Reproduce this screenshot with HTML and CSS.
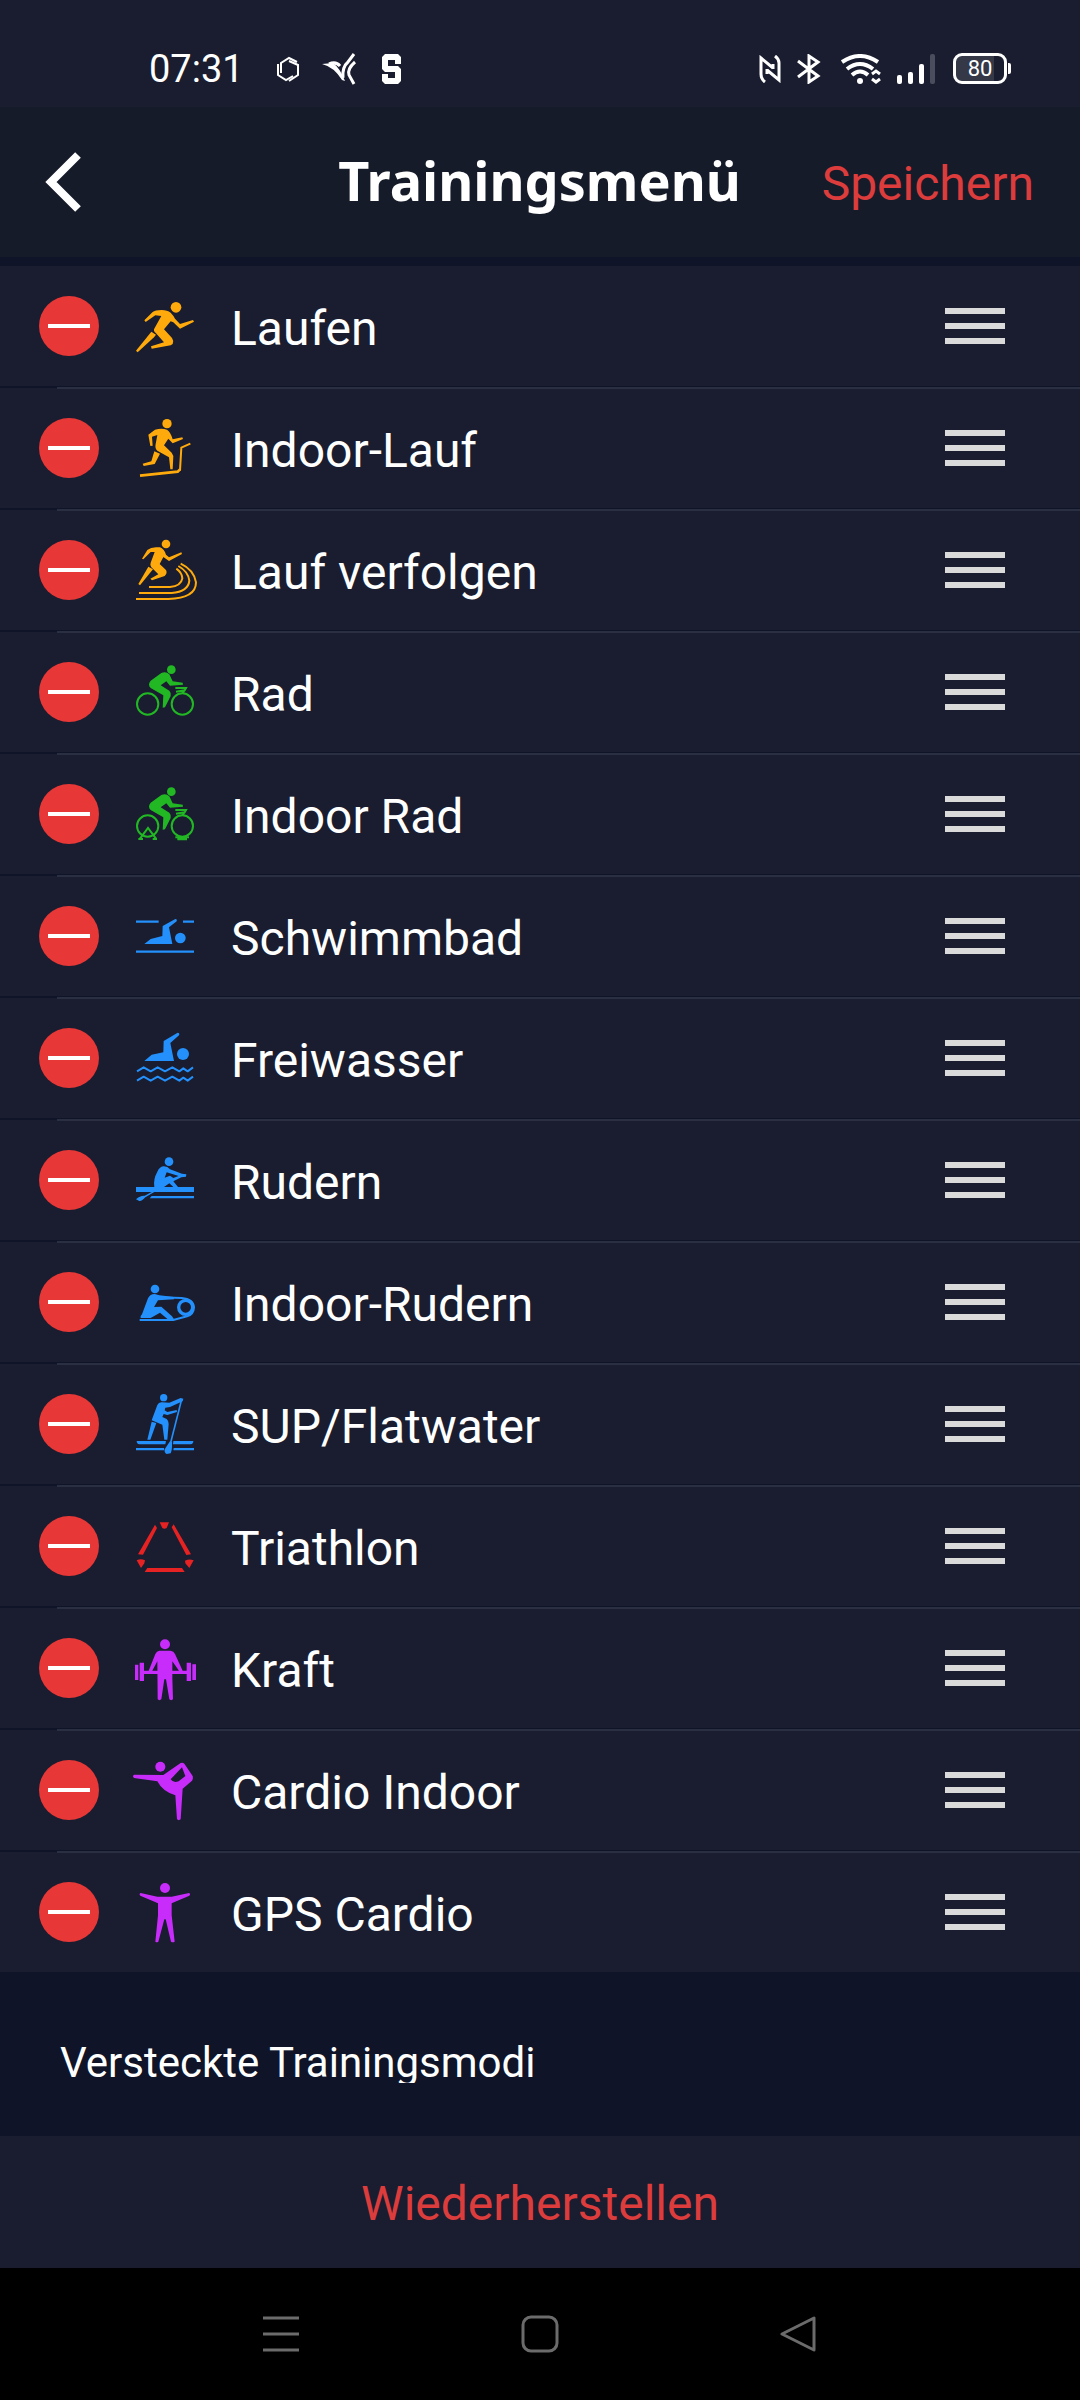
FILE: index.html
```html
<!DOCTYPE html>
<html lang="de">
<head>
<meta charset="utf-8">
<meta name="viewport" content="width=device-width, initial-scale=1">
<title>Trainingsmenü</title>
<link rel="stylesheet" href="styles.css">
</head>
<body>
<div class="status">
  <div class="status-left">
    <span class="clock">07:31</span>
    <svg class="s-hex" width="24" height="28" viewBox="0 0 24 28" fill="none" stroke="#fff" stroke-width="2"><path d="M5 18V8L13 3L21 7M2 9V20L10 25L17 21M13 6L22 10V20L13 26"/></svg>
    <svg class="s-bird" width="34" height="32" viewBox="0 0 34 32" fill="none" stroke="#fff" stroke-width="3"><path d="M7 11Q14 8 18 13M21 25Q20 14 26 9L32 1M33 9Q25 16 27 22L32 31"/><path d="M0 11L11 10Q18 15 23 28L20 27Q12 14 0 11Z" fill="#fff" stroke="none"/></svg>
    <svg class="s-s" width="19" height="30" viewBox="0 0 19 30"><path fill="#fff" d="M3 0H16L19 3V10H13V6H6V12H16L19 15V27L16 30H3L0 27V20H6V24H13V18H3L0 15V3Z"/></svg>
  </div>
  <div class="status-right">
    <svg width="22" height="28" viewBox="0 0 22 28" fill="none" stroke="#fff" stroke-width="3"><path d="M6 27Q2 24 2 19V3L14 13M16 1Q20 4 20 8V25L8 15M8 14V19M14 9V14"/></svg>
    <svg class="s-bt" width="24" height="30" viewBox="0 0 24 30" fill="none" stroke="#fff" stroke-width="3"><path d="M1 7L21 22L12 28V2L21 8L1 23"/></svg>
    <svg class="s-wifi" width="40" height="30" viewBox="0 0 40 30" fill="none" stroke="#fff" stroke-width="4"><path d="M1 8Q19-4 37 8M6 15Q19 5 32 15M11 21Q19 14 27 21"/><circle cx="19" cy="27" r="3" fill="#fff" stroke="none"/><path stroke-width="3" d="M31 20L35 17L39 20M31 25L35 28L39 25"/></svg>
    <svg class="s-signal" width="38" height="30" viewBox="0 0 38 30" fill="#fff"><rect y="21" width="5" height="9" rx="2"/><rect x="11" y="18" width="5" height="12" rx="2"/><rect x="22" y="10" width="5" height="20" rx="2"/><rect x="33" width="5" height="30" rx="2" fill="#4a4d5c"/></svg>
    <span class="battery">80</span>
  </div>
</div>

<header class="header">
  <button class="back" type="button" aria-label="Zurück"><svg width="38" height="60" viewBox="0 0 38 60" fill="none" stroke="#fff" stroke-width="8"><path d="M33 3L6 30L33 57"/></svg></button>
  <h1 class="title">Trainingsmenü</h1>
  <button class="save" type="button">Speichern</button>
</header>

<main>
  <ul class="list">
    <li class="row orange"><button class="remove" type="button" aria-label="Laufen entfernen"></button>
      <svg class="icon" viewBox="36 48 198 180"><circle cx="168" cy="82" r="16"/><path d="M73 121L98 96Q105 90 125 90Q142 90 152 98Q160 106 165 116L180 132L219 120L222 125L180 146L160 127L152 124L132 148L156 174Q162 182 158 192L152 196L95 206L93 199L132 187L108 160Q98 152 104 144L124 108L106 106L77 126Z"/><path d="M94 155L108 164L102 172L53 217L48 212Z"/></svg>
      <span class="label">Laufen</span><button class="handle" type="button" aria-label="Laufen verschieben"></button></li>
    <li class="row orange"><button class="remove" type="button" aria-label="Indoor-Lauf entfernen"></button>
      <svg class="icon" viewBox="36 414 198 180"><circle cx="141" cy="431" r="14"/><path d="M85 464L105 449Q125 444 141 449Q152 456 158 478L187 472L189 477L158 490L145 476L132 496L155 518L160 528L158 568H151L147 532L112 512Q104 506 107 492L112 465L96 470L98 497L91 498Z"/><path d="M103 514L120 521L104 552L71 558L68 551L94 544Z"/><path class="line" stroke-width="8" d="M60 587L173 575L180 568"/><path class="line" stroke-width="6" d="M180 572L184 503L211 491"/></svg>
      <span class="label">Indoor-Lauf</span><button class="handle" type="button" aria-label="Indoor-Lauf verschieben"></button></li>
    <li class="row orange"><button class="remove" type="button" aria-label="Lauf verfolgen entfernen"></button>
      <svg class="icon" viewBox="36 780 198 180"><circle cx="138" cy="792" r="13"/><path d="M66 836L82 810Q92 802 108 802L120 802Q132 806 138 824L147 832L184 817L186 822L147 843L130 831L119 852L138 870Q143 880 134 888L96 901L91 896L115 883L94 862Q89 856 92 848L104 816H92L70 838Z"/><path d="M85 860L99 868L60 916L55 912Z"/><path class="line" stroke-width="6" d="M87 921H150Q183 918 187 895Q186 878 169 866M57 939H155Q205 935 208 902Q205 875 175 858M48 957H145Q228 955 228 907Q222 870 182 851"/></svg>
      <span class="label">Lauf verfolgen</span><button class="handle" type="button" aria-label="Lauf verfolgen verschieben"></button></li>
    <li class="row green"><button class="remove" type="button" aria-label="Rad entfernen"></button>
      <svg class="icon" viewBox="36 66 198 180"><circle cx="154" cy="89" r="13"/><path d="M92 122L124 99Q138 93 148 103L158 124L188 128L189 134L150 137L139 124L122 136L148 152Q154 158 152 168L135 202L128 203L130 166L92 144Q82 134 92 122Z"/><circle class="line" stroke-width="6" cx="83" cy="192" r="32"/><circle class="line" stroke-width="6" cx="187" cy="192" r="32"/><path class="line" stroke-width="6" d="M166 144H198L194 151L168 155M194 151L187 160"/></svg>
      <span class="label">Rad</span><button class="handle" type="button" aria-label="Rad verschieben"></button></li>
    <li class="row green"><button class="remove" type="button" aria-label="Indoor Rad entfernen"></button>
      <svg class="icon" viewBox="36 66 198 180"><circle cx="154" cy="89" r="13"/><path d="M92 122L124 99Q138 93 148 103L158 124L188 128L189 134L150 137L139 124L122 136L148 152Q154 158 152 168L135 202L128 203L130 166L92 144Q82 134 92 122Z"/><circle class="line" stroke-width="6" cx="83" cy="192" r="32"/><circle class="line" stroke-width="6" cx="187" cy="192" r="32"/><path class="line" stroke-width="6" d="M166 144H198L194 151L168 155M194 151L187 160M60 230L84 198L108 230M55 231H69M98 231H111M166 226H207M172 232H201"/></svg>
      <span class="label">Indoor Rad</span><button class="handle" type="button" aria-label="Indoor Rad verschieben"></button></li>
    <li class="row blue"><button class="remove" type="button" aria-label="Schwimmbad entfernen"></button>
      <svg class="icon" viewBox="36 78 198 180"><path class="line" stroke-width="7" d="M48 125H116M189 125H222M48 215H222"/><circle cx="181" cy="174" r="16"/><path d="M73 192L92 177L127 168L128 138L166 117Q172 117 170 124L147 142L157 192Z"/></svg>
      <span class="label">Schwimmbad</span><button class="handle" type="button" aria-label="Schwimmbad verschieben"></button></li>
    <li class="row blue"><button class="remove" type="button" aria-label="Freiwasser entfernen"></button>
      <svg class="icon" viewBox="36 444 198 180"><circle cx="189" cy="522" r="18"/><path d="M73 543L95 524L130 517L131 483L173 458Q180 459 177 466L151 489L162 543Z"/><path class="line" stroke-width="6" stroke-linejoin="round" d="M51 574L71 562L92 574L113 562L135 574L157 562L178 574L190 565L203 574L219 562M51 602L71 590L92 602L113 590L135 602L157 590L178 602L190 593L203 602L219 590"/></svg>
      <span class="label">Freiwasser</span><button class="handle" type="button" aria-label="Freiwasser verschieben"></button></li>
    <li class="row blue"><button class="remove" type="button" aria-label="Rudern entfernen"></button>
      <svg class="icon" viewBox="36 60 198 180"><circle cx="147" cy="95" r="13"/><path fill-rule="evenodd" d="M103 171Q99 148 112 125Q118 111 130 109Q142 108 150 118L186 131L199 133L198 140L184 142L160 154L174 171H160L148 160L132 171ZM140 127L134 143L150 137L160 144L176 138Z"/><path d="M48 171H222V186H103L76 202Q66 214 58 213L48 208Q60 196 74 197L95 186H48ZM95 198H222V205H89Z"/></svg>
      <span class="label">Rudern</span><button class="handle" type="button" aria-label="Rudern verschieben"></button></li>
    <li class="row blue"><button class="remove" type="button" aria-label="Indoor-Rudern entfernen"></button>
      <svg class="icon" viewBox="36 426 198 180"><circle cx="105" cy="477" r="13"/><path d="M66 553L84 505Q90 492 104 492L118 496L162 501V508L114 511L102 531L124 530L156 559L162 568L146 570L120 548L92 564H62Q60 558 66 553Z"/><circle class="line" stroke-width="10" cx="197" cy="532" r="21"/><path class="line" stroke-width="6" d="M115 502L185 504Q220 507 222 532Q221 553 201 559L160 570H59"/></svg>
      <span class="label">Indoor-Rudern</span><button class="handle" type="button" aria-label="Indoor-Rudern verschieben"></button></li>
    <li class="row blue"><button class="remove" type="button" aria-label="SUP/Flatwater entfernen"></button>
      <svg class="icon" viewBox="36 72 198 180"><circle cx="131" cy="83" r="11"/><path d="M95 151L112 105Q116 96 126 97L148 98L182 84L190 86L188 94L150 111L136 113L134 121L142 126L170 120L171 126L142 135L131 132L127 141L140 147Q146 152 146 162L142 209H133L127 164Z"/><path d="M95 155L109 159L91 209H82ZM150 214L156 216Q157 240 152 250L140 252Q132 248 134 238ZM50 213H138L136 223H58Q50 222 50 213ZM160 213H220Q220 222 212 223H159ZM48 234H132V241H48ZM161 234H222V241H160Z"/><path class="line" stroke-width="5" d="M185 88L152 218"/></svg>
      <span class="label">SUP/Flatwater</span><button class="handle" type="button" aria-label="SUP/Flatwater verschieben"></button></li>
    <li class="row red"><button class="remove" type="button" aria-label="Triathlon entfernen"></button>
      <svg class="icon" viewBox="36 438 198 180"><path d="M119 457H147L140 474Q133 478 127 474ZM105 464L111 474L69 554L54 553ZM161 463L213 553L199 555L155 472ZM82 594H186L194 606H74ZM50 571Q62 565 75 571L73 580L63 594ZM195 572Q208 566 221 571L208 594L196 580Z"/></svg>
      <span class="label">Triathlon</span><button class="handle" type="button" aria-label="Triathlon verschieben"></button></li>
    <li class="row purple"><button class="remove" type="button" aria-label="Kraft entfernen"></button>
      <svg class="icon" viewBox="36 84 198 180"><circle cx="135" cy="103" r="15"/><path d="M118 122H152Q161 123 165 132L188 182L178 184L157 154V205L159 268Q153 273 148 268L138 208H133L124 268Q118 273 113 268L112 154L96 184L86 182L106 132Q110 123 118 122ZM45 164H55V210H45ZM59 158H72V213H59ZM200 158H213V213H200ZM217 163H228V210H217ZM70 182H202V192H70Z"/></svg>
      <span class="label">Kraft</span><button class="handle" type="button" aria-label="Kraft verschieben"></button></li>
    <li class="row purple"><button class="remove" type="button" aria-label="Cardio Indoor entfernen"></button>
      <svg class="icon" viewBox="36 450 198 180"><circle cx="121" cy="470" r="15"/><path fill-rule="evenodd" d="M42 494L130 495L182 459Q188 456 193 461L218 498Q220 506 216 512L188 536L182 628Q176 633 171 628L166 556Q128 545 112 514L42 504Q36 499 42 494ZM186 472L152 508Q160 520 176 514L196 498Z"/></svg>
      <span class="label">Cardio Indoor</span><button class="handle" type="button" aria-label="Cardio Indoor verschieben"></button></li>
    <li class="row purple"><button class="remove" type="button" aria-label="GPS Cardio entfernen"></button>
      <svg class="icon" viewBox="36 816 198 180"><circle cx="135" cy="834" r="15"/><path d="M62 849L112 860H155L207 849Q213 852 208 857L155 880V916L164 995Q159 999 153 995L137 928H133L115 995Q110 999 106 995L114 916V880L61 857Q56 852 62 849Z"/></svg>
      <span class="label">GPS Cardio</span><button class="handle" type="button" aria-label="GPS Cardio verschieben"></button></li>
  </ul>
  <section class="hidden-modes"><h2 class="subtitle">Versteckte Trainingsmodi</h2></section>
  <button class="restore" type="button">Wiederherstellen</button>
</main>

<nav class="nav">
  <button type="button" aria-label="Letzte Apps"><svg width="38" height="38" viewBox="0 0 38 38"><path d="M1 3H37M1 19H37M1 35H37"/></svg></button>
  <button type="button" aria-label="Startbildschirm"><svg width="38" height="38" viewBox="0 0 38 38"><rect x="2" y="2" width="34" height="34" rx="8"/></svg></button>
  <button type="button" aria-label="Zurück"><svg width="38" height="38" viewBox="0 0 38 38"><path stroke-linejoin="round" d="M34 3V35L2 19Z"/></svg></button>
</nav>
</body>
</html>
```
FILE: styles.css
```css
* { box-sizing: border-box; }
body {
  margin: 0;
  background: #0f1428;
  color: #fff;
  font-family: Roboto, sans-serif;
  font-size: 48px;
}
button {
  margin: 0;
  padding: 0;
  border: 0;
  background: none;
  color: inherit;
  font: inherit;
}
svg { display: block; flex: none; }

.status {
  display: flex;
  align-items: center;
  justify-content: space-between;
  height: 107px;
  padding: 30px 73px 0 149px;
  background: #191d2f;
}
.status-left, .status-right { display: flex; align-items: center; }
.clock { font-size: 38px; line-height: 44px; }
.s-hex { margin-left: 32px; }
.s-bird { margin-left: 22px; }
.s-s { margin-left: 26px; }
.s-bt { margin-left: 16px; }
.s-wifi { margin-left: 20px; }
.s-signal { margin-left: 16px; }
.battery {
  position: relative;
  width: 54px;
  height: 31px;
  margin-left: 18px;
  border: 3px solid #fff;
  border-radius: 9px;
  background: linear-gradient(90deg, #343847 80%, #191d2f 80%);
  font-size: 22px;
  line-height: 25px;
  text-align: center;
}
.battery::after {
  content: "";
  position: absolute;
  top: 7px;
  right: -7px;
  width: 3px;
  height: 11px;
  border-radius: 0 2px 2px 0;
  background: #fff;
}

.header {
  display: grid;
  grid-template-columns: 1fr auto 1fr;
  align-items: center;
  height: 150px;
  margin-bottom: 9px;
  padding: 0 46px 0 45px;
  background: #161b2a;
}
.back { justify-self: start; }
.title {
  margin: 0;
  padding-bottom: 4px;
  font: bold 54px/75px "Noto Sans", sans-serif;
}
.save { justify-self: end; padding-top: 2px; color: #dc3c3c; }

.list {
  display: flex;
  flex-direction: column;
  gap: 2px;
  margin: 0;
  padding: 0;
  list-style: none;
}
.row {
  position: relative;
  display: flex;
  align-items: center;
  height: 120px;
  padding: 0 75px 0 39px;
  background: #191d2f;
}
.row + .row::before {
  content: "";
  position: absolute;
  top: -1px;
  left: 57px;
  right: 0;
  height: 2px;
  background: #2a2f41;
}
.remove {
  display: grid;
  place-items: center;
  width: 60px;
  height: 60px;
  border-radius: 50%;
  background: #e83737;
}
.remove::before { content: ""; width: 42px; height: 4px; background: #fff; }
.icon {
  width: 66px;
  height: 60px;
  margin-left: 33px;
  overflow: visible;
  fill: currentColor;
}
.line { fill: none; stroke: currentColor; }
.orange .icon { color: #ffaa0c; }
.green .icon { color: #22b824; }
.blue .icon { color: #2490fb; }
.red .icon { color: #e62222; }
.purple .icon { color: #c82cfa; }
.label { flex: 1; padding: 6px 0 0 33px; line-height: 56px; }
.handle {
  display: grid;
  align-content: center;
  width: 60px;
  height: 60px;
}
.handle::before {
  content: "";
  height: 36px;
  background: repeating-linear-gradient(#dadada 0 6px, transparent 6px 15px);
}

.hidden-modes { height: 164px; padding: 67px 60px 0; }
.subtitle {
  height: 44px;
  margin: 0;
  overflow: hidden;
  font-size: 42px;
  font-weight: 400;
  line-height: 48px;
}
.restore {
  display: block;
  width: 100%;
  height: 132px;
  padding-top: 2px;
  background: #191d2f;
  color: #dc3c3c;
}

.nav {
  display: grid;
  grid-template-columns: repeat(3, 1fr);
  align-items: center;
  justify-items: center;
  height: 132px;
  padding: 0 14%;
  background: #000;
}
.nav svg { fill: none; stroke: #6b6b6b; stroke-width: 3; }
```
